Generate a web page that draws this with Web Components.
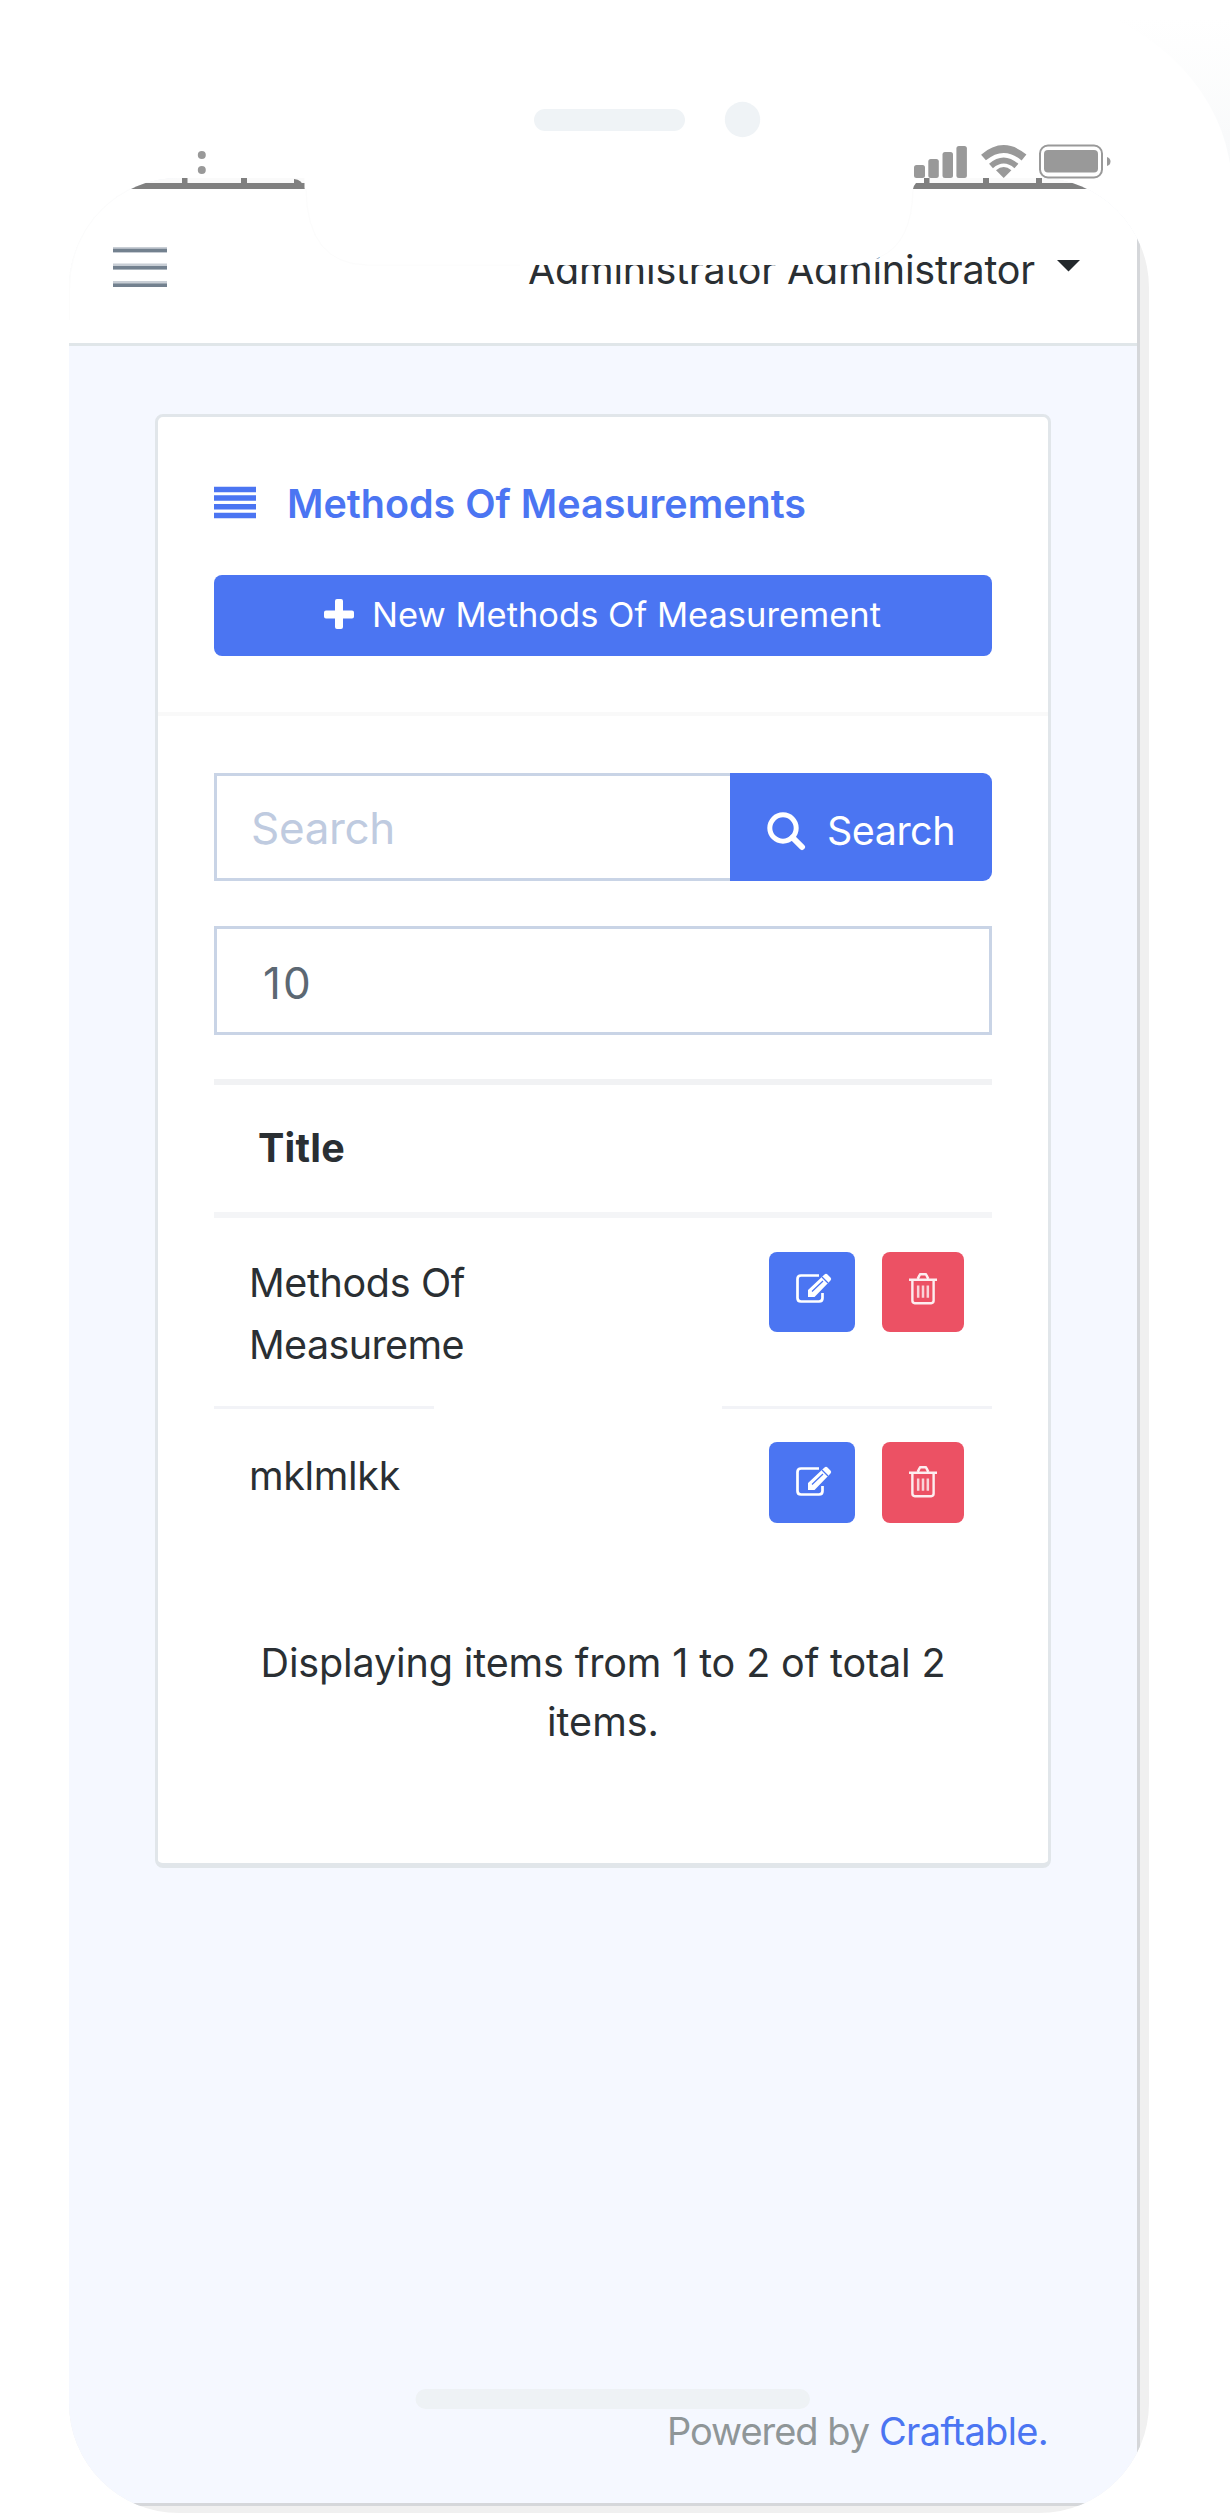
<!DOCTYPE html>
<html lang="en"><head><meta charset="utf-8"><title>Methods Of Measurements</title>
<style>
html,body{margin:0;background:#fff}
body{font-family:Inter,"Liberation Sans",sans-serif;color:#2a2f33}
</style></head><body>
<phone-frame>
  <app-header slot="app">Administrator Administrator</app-header>
  <app-card slot="app">
    <card-heading>Methods Of Measurements</card-heading>
    <search-form></search-form>
    <page-size>10</page-size>
    <data-table>
      <data-row><fit-text w="216" size="39.5">Methods Of</fit-text><fit-text w="215" size="39.5">Measureme</fit-text></data-row>
      <data-row last><fit-text w="151" size="39.5">mklmlkk</fit-text></data-row>
    </data-table>
    <list-summary></list-summary>
  </app-card>
  <app-footer slot="app"></app-footer>
</phone-frame>
<script>
const define=(name,html,ready)=>customElements.define(name,class extends HTMLElement{
  constructor(){super();this.attachShadow({mode:'open'}).innerHTML='<style>*{box-sizing:border-box}:host{box-sizing:border-box}svg{display:block;flex:none}</style>'+html}
  connectedCallback(){if(ready)ready(this)}
});

/* One line of text tracked to a given width */
define('fit-text','<style>:host{display:block;white-space:nowrap}span{display:inline-block}</style><span><slot></slot></span>',el=>{
  const span=el.shadowRoot.querySelector('span');
  el.style.fontSize=el.getAttribute('size')+'px';
  el.style.width=el.getAttribute('w')+'px';
  const fit=()=>{
    span.style.letterSpacing='0px';
    const n=el.textContent.trim().length,w=span.getBoundingClientRect().width;
    if(n&&w)span.style.letterSpacing=((+el.getAttribute('w')-w)/n)+'px';
  };
  fit();requestAnimationFrame(fit);
});

define('phone-frame',`<style>
:host{display:flow-root;position:relative;width:1230px;height:2520px;overflow:hidden;background:#fff}
.screen{margin:178px 0 0 69px;width:1080px;height:2335px;border-radius:110px;overflow:hidden;background:#f0f0f0}
.app{width:1071px;height:2328px;border:solid #d5d7da;border-width:0 3px 3px 0;background:#f5f8ff;overflow:hidden}
.strip{height:11px;background:linear-gradient(#fafafa 5px,#808080 5px)}
.over{position:absolute;left:0;top:0}
</style>
<div class="screen"><div class="app"><div class="strip"></div><slot name="app"></slot></div></div>
<svg class="over" width="1230" height="2520" viewBox="0 0 1230 2520">
<defs><linearGradient id="g" x1="0" y1="0" x2="0" y2="1"><stop offset="0" stop-color="#fafbfb" stop-opacity="0"/><stop offset=".6" stop-color="#f9fafb"/><stop offset="1" stop-color="#f6f8f9"/></linearGradient></defs>
<path d="M1120 18H1230V215A230 195 0 0 0 1120 22Z" fill="url(#g)"/>
<path d="M304.500 177V189Q306 265 367 265H851Q913 259 913 189V177Z" fill="#fff"/>
<path d="M306 189Q307 264 367 265H520M880 257Q912 243 913 189M69.500 320V288A110 110 0 0 1 130 189" fill="none" stroke="#fcfcfc" stroke-width="1"/>
<g fill="#808080"><path d="M182 178h5.500v6H182zM241 178h6v6h-6zM294 179q8 0 10.500 10H294zM923.500 178h6v6h-6zM983 178h6v6h-6zM1036 178h6v6h-6z"/></g>
<path d="M912 177h12v6h-8q-2 2-3 6h-1z" fill="#fff"/>
<g fill="#999"><circle cx="201.800" cy="155" r="4"/><circle cx="201.800" cy="170" r="4"/>
<rect x="914" y="165" width="11" height="13" rx="2.500"/><rect x="928.300" y="159" width="10.500" height="19" rx="2.500"/><rect x="942.500" y="152" width="10.500" height="26" rx="2.500"/><rect x="956.400" y="146" width="10.500" height="32" rx="2.500"/>
<path d="M1003.700 178L996 170.200Q1003.700 163.800 1011.400 170.200Z"/><rect x="1044" y="150" width="54" height="22.500" rx="4"/><path d="M1107 157Q1110.500 158 1110.500 161.500T1107 166Z"/></g>
<g fill="none" stroke="#999"><path d="M983.500 157.500Q1003.700 140.500 1024 157.500" stroke-width="7.500"/><path d="M991 166Q1003.700 155 1016.400 166" stroke-width="6"/><rect x="1040" y="145.500" width="62" height="32" rx="8" stroke-width="2"/></g>
<g fill="#eff3f6"><rect x="534" y="109" width="151" height="22" rx="11"/><circle cx="742.500" cy="119.500" r="17.700"/><rect x="415.500" y="2389" width="394.500" height="20" rx="10" fill="#eef2f5"/></g>
</svg>`);

define('app-header',`<style>
:host{display:flex;height:157px;padding:0 57px 0 44px;background:#fff;border-bottom:3px solid #e0e6e9;align-items:flex-start}
.menu{margin-top:58px}.name{margin-left:auto;margin-top:56px;line-height:50px}.caret{margin:71px 0 0 22px}
</style><svg class="menu" width="54" height="42" viewBox="0 0 54 42"><path d="M0 2.500H54M0 19.500H54M0 37H54" stroke="#c8ced5" stroke-width="6"/><path d="M0 3.500H54M0 20.700H54M0 38.300H54" stroke="#73818f" stroke-width="3.500"/></svg>
<fit-text class="name" w="507" size="39.5"></fit-text>
<svg class="caret" width="23" height="12" viewBox="0 0 23 12"><path d="M0 0H23L11.500 11.500Z" fill="#23282c"/></svg>`,
el=>{const t=el.shadowRoot.querySelector('fit-text');t.textContent=el.textContent.trim();t.connectedCallback()});

define('app-card',`<style>
:host{display:block;width:896px;height:1453.500px;margin:68px 0 0 86px;border:3px solid #e1e6ea;border-bottom-width:5px;border-radius:8px;background:#fff;padding-top:61px}
</style><slot></slot>`);

define('card-heading',`<style>
:host{display:block;padding:0 56px;color:#4b75f2;border-bottom:4px solid #f9f9f9;height:238px}
.title{display:flex;align-items:center;height:50px;line-height:50px;font-weight:600}.title svg{margin-top:-2px}.title fit-text{margin:2px 0 0 31px}
.btn{display:flex;align-items:center;margin-top:47px;height:81px;border-radius:8px;background:#4b75f2;color:#fff;padding-left:110px;line-height:50px}
.btn svg{margin-top:-3px}.btn fit-text{margin:-1px 0 0 18px}
</style><div class="title"><svg width="42" height="33" viewBox="0 0 42 33"><path d="M0 3.500H42M0 12H42M0 20.700H42M0 29.500H42" stroke="#4b75f2" stroke-width="5.500"/></svg><fit-text w="519" size="39.5"><slot></slot></fit-text></div>
<div class="btn"><svg width="30" height="30" viewBox="0 0 30 30"><path d="M2 11.500h9V2q0-2 2-2h4q2 0 2 2v9.500h9q2 0 2 2v4q0 2-2 2h-9V28q0 2-2 2h-4q-2 0-2-2v-8.500H2q-2 0-2-2v-4q0-2 2-2z" fill="#fff"/></svg><fit-text w="509" size="34.500">New Methods Of Measurement</fit-text></div>`,
el=>{const t=el.shadowRoot.querySelector('.title fit-text'),s=el.textContent.trim();t.textContent=s;t.connectedCallback()});

define('search-form',`<style>
:host{display:flex;height:108px;margin:57px 56px 0}
.field{flex:1;border:3px solid #c9d4e6;border-right:0;color:#bfcbe0;padding:26px 0 0 34px;line-height:52px}
.btn{width:262px;display:flex;background:#4b75f2;border-radius:0 9px 9px 0;color:#fff;padding:39px 0 0 37px;line-height:50px}
.btn fit-text{margin:-6px 0 0 21px}
</style><div class="field"><fit-text w="144" size="44">Search</fit-text></div>
<div class="btn"><svg width="39" height="39" viewBox="0 0 39 39"><circle cx="16" cy="16" r="13.200" fill="none" stroke="#fff" stroke-width="5"/><path d="M25.500 25.500L35 35" stroke="#fff" stroke-width="6" stroke-linecap="round"/></svg><fit-text w="128" size="39.5">Search</fit-text></div>`);

define('page-size',`<style>
:host{display:block;height:109px;margin:45px 56px 0;border:3px solid #c9d4e6;color:#5c6873;font-size:44px;line-height:52px;padding:28px 0 0 46px}
</style><fit-text w="50" size="44">10</fit-text>`);

define('data-table',`<style>
:host{display:block;margin:44px 56px 0;border-top:6px solid #f1f2f4}
.head{height:132.500px;border-bottom:6px solid #f4f5f7;padding:38px 0 0 44px;line-height:50px;font-weight:700}
</style><div class="head"><fit-text w="87" size="39.5">Title</fit-text></div><slot></slot>`);

define('data-row',`<style>
:host{display:block}
.row{display:flex;height:188px;padding:34px 28px 0 35px;justify-content:space-between;line-height:62px}
.line{display:flex;justify-content:space-between;height:3px}.line i{background:#f2f3f7;width:220px}.line i+i{width:270px}
:host([last]) .row{height:224px;padding-top:36px}:host([last]) .line{display:none}
.actions{display:flex;gap:27px}:host([last]) .actions{margin-top:-3px}
.b{width:86px;height:80px;border-radius:8px;background:#4b75f2;padding:21px 0 0 27px}.r{width:82px;background:#ec5164}
:host([last]) .b{height:81px;padding-top:24px}
</style><div class="row"><div><slot></slot></div><div class="actions">
<div class="b"><svg width="36" height="31" viewBox="0 0 36 31" fill="none" stroke="#fff"><path d="M23 2.500H5Q1.500 2.500 1.500 6V25Q1.500 28.500 5 28.500H23Q26.500 28.500 26.500 25V20" stroke-width="2.700"/><path d="M12 24V17L28.500 1.500Q30 0 31.500 1.500L34.500 4.500Q36 6 34.500 7.500L18.500 24Z" fill="#fff" stroke="none"/><path d="M16 18.500L27 8M26 4L32 10" stroke="#4b75f2" stroke-width="1.300"/></svg></div>
<div class="b r"><svg width="28" height="32" viewBox="0 0 29 33" fill="none" stroke="#fff" stroke-opacity=".9"><path d="M0 7H29M3.500 7V28.500Q3.500 31.200 6 31.200H23Q25.500 31.200 25.500 28.500V7" stroke-width="2.500"/><path d="M9 6L11 2Q11.300 1.300 12 1.300H17Q17.700 1.300 18 2L20 6" stroke-width="2.600"/><path d="M9.500 13V25.500M14.500 13V25.500M19.500 13V25.500" stroke-width="2.600" stroke-opacity=".75"/></svg></div></div></div>
<div class="line"><i></i><i></i></div>`);

define('list-summary',`<style>
:host{display:flex;flex-direction:column;align-items:center;line-height:59px;padding-top:1px}
</style><fit-text w="685" size="39.5">Displaying items from 1 to 2 of total 2</fit-text><fit-text w="112" size="39.5">items.</fit-text>`);

define('app-footer',`<style>
:host{display:flex;justify-content:flex-end;margin-top:538px;padding-right:89px;gap:10px;line-height:50px;color:#8f9698}
.c{color:#4b75f2}
</style><fit-text w="202" size="38">Powered by</fit-text><fit-text class="c" w="169" size="38">Craftable.</fit-text>`);
</script></body></html>
